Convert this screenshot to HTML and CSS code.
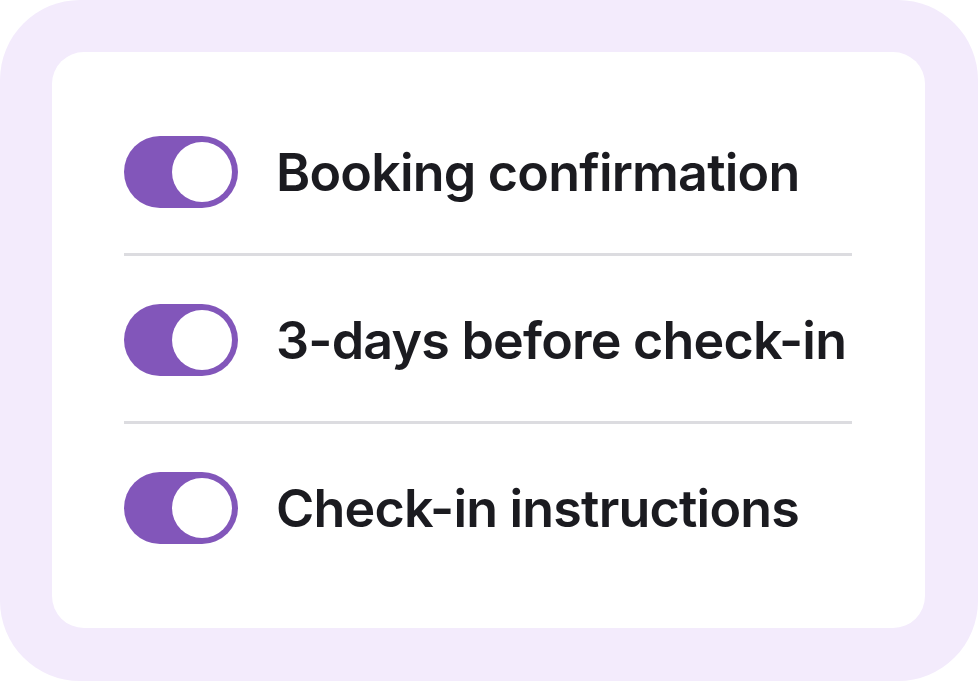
FILE: index.html
```html
<!DOCTYPE html>
<html lang="en">
<head>
  <meta charset="UTF-8">
  <meta name="viewport" content="width=device-width, initial-scale=1.0">
  <title>Notification settings</title>
  <link rel="stylesheet" href="styles.css">
</head>
<body>
  <div class="frame">
    <div class="card">
      <div class="row">
        <span class="toggle on"><span class="knob"></span></span>
        <span class="label">Booking confirmation</span>
      </div>
      <div class="divider"></div>
      <div class="row">
        <span class="toggle on"><span class="knob"></span></span>
        <span class="label">3-days before check-in</span>
      </div>
      <div class="divider"></div>
      <div class="row">
        <span class="toggle on"><span class="knob"></span></span>
        <span class="label">Check-in instructions</span>
      </div>
    </div>
  </div>
</body>
</html>
```

FILE: styles.css
```css
html, body { margin: 0; padding: 0; background: #fff; }
body {
  font-family: Inter, "Noto Sans", Arial, sans-serif;
  width: 978px; height: 681px; overflow: hidden;
}
.frame {
  box-sizing: border-box;
  width: 978px; height: 681px;
  padding: 52px 53px 53px 52px;
  background: #f3ebfc;
  border-radius: 80px;
}
.card {
  box-sizing: border-box;
  height: 100%;
  background: #fff;
  border-radius: 32px;
  padding: 84px 73px 84px 72px;
}
.row {
  display: flex; align-items: center; gap: 38px;
  height: 72px;
}
.divider {
  height: 3px; background: #dcdce0;
  margin: 45px 0 48px;
}
.toggle {
  box-sizing: border-box;
  width: 114px; height: 72px; flex: none;
  border-radius: 36px;
  background: #8256ba;
  padding: 6px;
  display: flex; justify-content: flex-end;
}
.knob {
  width: 60px; height: 60px; border-radius: 50%;
  background: #fff;
}
.label {
  font-size: 52px; font-weight: 600; color: #1b1b20;
  letter-spacing: -0.8px; white-space: nowrap;
}
```
